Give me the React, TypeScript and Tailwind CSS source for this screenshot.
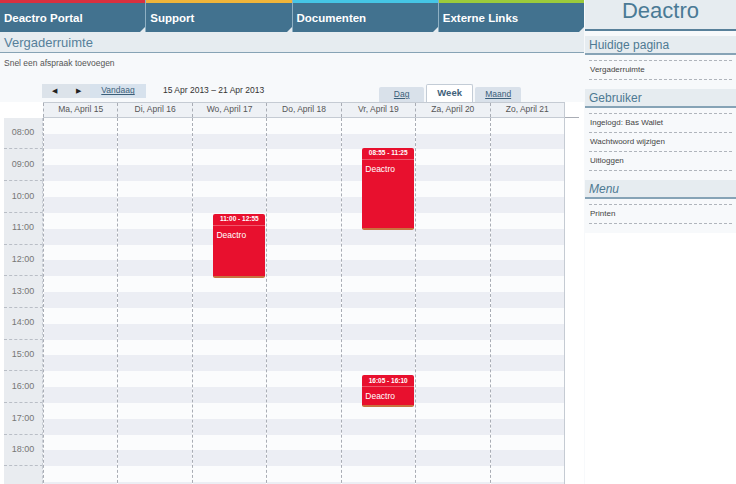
import React from "react";

const NAV = [
  { label: "Deactro Portal", stripe: "border-[#d9303f]" },
  { label: "Support", stripe: "border-[#f0b53a]" },
  { label: "Documenten", stripe: "border-[#45c6e6]" },
  { label: "Externe Links", stripe: "border-[#9ccb3b]" },
];

const DAYS = ["Ma, April 15", "Di, April 16", "Wo, April 17", "Do, April 18", "Vr, April 19", "Za, April 20", "Zo, April 21"];
const HOURS = ["08:00", "09:00", "10:00", "11:00", "12:00", "13:00", "14:00", "15:00", "16:00", "17:00", "18:00", ""];

const HOUR_PX = 31.7;

// day index -> events (start / end in hours)
const EVENTS = [
  { day: 2, start: 11, end: 12 + 55 / 60, label: "11:00 - 12:55" },
  { day: 4, start: 8 + 55 / 60, end: 11 + 25 / 60, label: "08:55 - 11:25" },
  { day: 4, start: 16 + 5 / 60, end: 16 + 10 / 60, label: "16:05 - 16:10" },
];

export default function App() {
  return (
    <div className="w-[736px] h-[484px] overflow-hidden bg-[#f7f9fb] flex font-['Liberation_Sans',Arial,sans-serif]">
      <main className="w-[584px] shrink-0 flex flex-col">
        {/* Top nav */}
        <nav className="shrink-0 flex gap-px h-[32px] bg-[#8fb0c3]">
          {NAV.map((n) => (
            <div
              key={n.label}
              className={`relative flex-1 bg-[#42728f] border-t-[3px] ${n.stripe} flex items-center px-[4px] pt-[2px] text-white text-[11.5px] font-bold`}
            >
              {n.label}
              <span className="absolute right-0 bottom-0 w-0 h-0 border-l-[5px] border-l-transparent border-b-[5px] border-b-[#e6ecf0]" />
            </div>
          ))}
        </nav>

        {/* Page heading */}
        <div className="shrink-0 h-[21px] bg-[#e6ecf0] border-b border-[#87a3b5] flex items-center px-[4px] pt-[2px] text-[13px] text-[#56809a]">
          Vergaderruimte
        </div>
        <div className="shrink-0 pl-[4px] pt-[4px] text-[8.5px] text-[#555]">Snel een afspraak toevoegen</div>

        {/* Toolbar */}
        <div className="shrink-0 mt-[14px] h-[18px] flex items-end pl-[42px]">
          <div className="flex items-center self-start h-[14px]">
            <div className="w-[48px] h-[14px] bg-[#dce3ea] flex items-center justify-around text-[7px] text-[#222]">
              <span>◀</span>
              <span>▶</span>
            </div>
            <div className="w-[56px] h-[14px] bg-[#d7e2ed] flex items-center justify-center text-[8.5px] text-[#3b5f7a] underline">
              Vandaag
            </div>
            <div className="ml-[17px] text-[8.5px] text-[#333]">15 Apr 2013 – 21 Apr 2013</div>
          </div>
          <div className="ml-[115px] flex items-end gap-[2px]">
            <div className="w-[45px] h-[15px] bg-[#d9e1ea] rounded-t-[2px] flex items-center justify-center text-[8.5px] text-[#3b5f7a] underline">
              Dag
            </div>
            <div className="w-[47px] h-[18px] bg-white border border-b-0 border-[#c3ccd6] rounded-t-[2px] flex items-center justify-center text-[9.5px] font-bold text-[#41617a]">
              Week
            </div>
            <div className="w-[46px] h-[15px] bg-[#d9e1ea] rounded-t-[2px] flex items-center justify-center text-[8.5px] text-[#3b5f7a] underline">
              Maand
            </div>
          </div>
        </div>

        {/* Calendar */}
        <div className="flex-1 min-h-0 bg-white flex">
          <div className="w-[39px] ml-[4px] shrink-0 flex flex-col">
            <div className="h-[16px] shrink-0 bg-white" />
            {HOURS.map((h, i) => (
              <div
                key={i}
                style={{ height: HOUR_PX }}
                className="shrink-0 bg-[#e9ecf0] border-b border-dashed border-[#b9bec6] border-r border-r-[#c9ced6] flex items-center justify-center text-[9px] text-[#777]"
              >
                {h}
              </div>
            ))}
          </div>
          <div className="w-[522px] shrink-0 flex flex-col">
            <div className="h-[16px] shrink-0 grid grid-cols-7 bg-[#eef1f5] border-t border-b border-[#c5cbd3] border-r">
              {DAYS.map((d) => (
                <div key={d} className="border-l border-dashed border-[#a9adb5] flex items-center justify-center text-[8.5px] text-[#555]">
                  {d}
                </div>
              ))}
            </div>
            <div className="grid grid-cols-7 border-r border-[#c5cbd3]">
              {DAYS.map((d, di) => (
                <div key={d} className="relative border-l border-dashed border-[#a9adb5]">
                  {HOURS.map((_, i) => (
                    <div key={i} style={{ height: HOUR_PX }} className="flex flex-col">
                      <div className="flex-1 bg-[#fbfcfd]" />
                      <div className="flex-1 bg-[#eceef4]" />
                    </div>
                  ))}
                  {EVENTS.filter((e) => e.day === di).map((e) => (
                    <div
                      key={e.label}
                      style={{ top: (e.start - 8) * HOUR_PX + 1, height: Math.max((e.end - e.start) * HOUR_PX + 3, 32) }}
                      className="absolute left-[28%] right-[1px] bg-[#e8102e] rounded-[2px] border-b-2 border-[#c9733f] text-white"
                    >
                      <div className="h-[12px] flex items-center justify-center text-[6.5px] font-bold border-b border-[#f0566a]">
                        {e.label}
                      </div>
                      <div className="pl-[3px] pt-[3px] text-[8.5px]">Deactro</div>
                    </div>
                  ))}
                </div>
              ))}
            </div>
          </div>
          <div className="w-[14px] shrink-0">
            <div className="h-[16px] border-b border-[#a9adb5]" />
          </div>
        </div>
      </main>

      {/* Sidebar */}
      <aside className="flex-1 ml-[1px] flex flex-col bg-white">
        <div className="shrink-0 h-[31px] bg-[#e6ecf0] border-b-2 border-[#58809a] flex items-start justify-center overflow-hidden">
          <span className="text-[22px] leading-[22px] text-[#4a7a95]">Deactro</span>
        </div>
        <div className="bg-[#f7f9fb] pt-[5px]">
          <Panel title="Huidige pagina" items={["Vergaderruimte"]} />
          <Panel title="Gebruiker" items={["Ingelogd: Bas Wallet", "Wachtwoord wijzigen", "Uitloggen"]} />
          <Panel title="Menu" items={["Printen"]} italic />
        </div>
      </aside>
    </div>
  );
}

function Panel({ title, items, italic }: { title: string; items: string[]; italic?: boolean }) {
  return (
    <div className="mb-[9px]">
      <div
        className={`h-[19px] bg-[#e6ecf0] border-b-2 border-[#86a3b6] flex items-center px-[4px] text-[12px] text-[#4e7a93] ${italic ? "italic" : ""}`}
      >
        {title}
      </div>
      <div className="mt-[5px] mx-[4px] border-t border-dashed border-[#b0b5bc]">
        {items.map((it) => (
          <div key={it} className="h-[19px] border-b border-dashed border-[#b0b5bc] flex items-center pl-[1px] text-[8px] text-[#444]">
            {it}
          </div>
        ))}
      </div>
    </div>
  );
}
